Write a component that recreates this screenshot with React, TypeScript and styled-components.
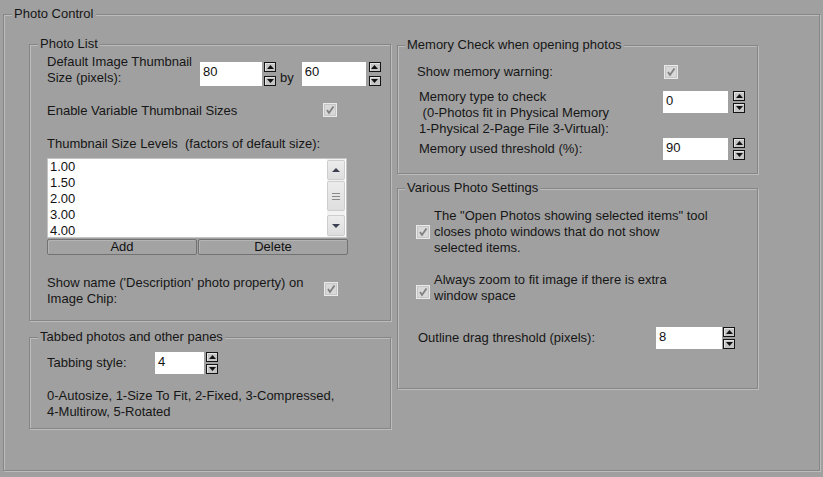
import React from 'react';
import styled, { createGlobalStyle } from 'styled-components';

const Global = createGlobalStyle`
  html, body { margin: 0; padding: 0; background: #a0a0a0; }
  body {
    font-family: "Liberation Sans", Arial, sans-serif;
    font-size: 13px;
    color: #161616;
  }
  * { box-sizing: border-box; }
`;

const Screen = styled.div`
  width: 823px;
  height: 477px;
  padding: 6px 3px 0 3px;
  background: #a0a0a0;
  overflow: hidden;
`;

const Group = styled.fieldset<{ $w: number; $h: number }>`
  margin: 0;
  padding: 0;
  min-width: 0;
  width: ${p => p.$w}px;
  height: ${p => p.$h}px;
  border: 1px solid #868686;
  box-shadow: inset 1px 1px 0 #bcbcbc, 1px 1px 0 #bcbcbc;
  flex: none;
`;

const Legend = styled.legend<{ $ml?: number }>`
  margin-left: ${p => p.$ml ?? 8}px;
  padding: 0 2px;
  line-height: 16px;
  background: #a0a0a0;
  color: #161616;
`;

const Body = styled.div<{ $pt: number; $pl: number }>`
  display: flex;
  flex-direction: column;
  align-items: flex-start;
  padding: ${p => p.$pt}px 0 0 ${p => p.$pl}px;
`;

const Columns = styled.div`
  display: flex;
  gap: 6px;
  padding: 14px 0 0 25px;
`;

const Column = styled.div<{ $mt?: number; $gap: number }>`
  display: flex;
  flex-direction: column;
  gap: ${p => p.$gap}px;
  margin-top: ${p => p.$mt ?? 0}px;
`;

const Row = styled.div<{ $align?: string; $mt?: number }>`
  display: flex;
  align-items: ${p => p.$align ?? 'center'};
  margin-top: ${p => p.$mt ?? 0}px;
`;

const Text = styled.div<{ $w?: number; $mt?: number; $indent?: number }>`
  width: ${p => (p.$w ? `${p.$w}px` : 'auto')};
  margin-top: ${p => p.$mt ?? 0}px;
  padding-left: ${p => p.$indent ?? 0}px;
  line-height: 16px;
  white-space: nowrap;
  flex: none;
`;

const By = styled.span`
  margin: 0 8px 0 4px;
  line-height: 16px;
`;

/* ---------- spin edit ---------- */
const Field = styled.div<{ $w: number; $h: number }>`
  width: ${p => p.$w}px;
  height: ${p => p.$h}px;
  background: #ffffff;
  padding: 2px 3px 0 3px;
  line-height: 16px;
  color: #111;
  flex: none;
`;

const Spinner = styled.div<{ $h: number; $gap: number }>`
  display: flex;
  flex-direction: column;
  justify-content: space-between;
  height: ${p => p.$h}px;
  margin-left: ${p => p.$gap}px;
  flex: none;
`;

const SpinBtn = styled.span`
  display: flex;
  align-items: center;
  justify-content: center;
  width: 12px;
  height: 10px;
  border: 1px solid #141414;
  background: #c6c6c6;
  box-shadow: inset 1px 1px 0 #e4e4e4;
`;

const Tri = ({ up }: { up?: boolean }) => (
  <svg width="7" height="4" viewBox="0 0 7 4">
    {up ? <polygon points="0,4 7,4 3.5,0" fill="#111" /> : <polygon points="0,0 7,0 3.5,4" fill="#111" />}
  </svg>
);

const Spin = ({ value, w, h, gap }: { value: string; w: number; h: number; gap: number }) => (
  <>
    <Field $w={w} $h={h}>{value}</Field>
    <Spinner $h={h} $gap={gap}>
      <SpinBtn><Tri up /></SpinBtn>
      <SpinBtn><Tri /></SpinBtn>
    </Spinner>
  </>
);

/* ---------- check box ---------- */
const CheckBox = styled.span<{ $mt?: number }>`
  display: flex;
  align-items: center;
  justify-content: center;
  width: 14px;
  height: 14px;
  margin-top: ${p => p.$mt ?? 0}px;
  background: #d8d8d8;
  border: 1px solid #eaeaea;
  box-shadow: inset 0 0 0 1px #c6c6c6;
  flex: none;
`;

const Check = ({ mt }: { mt?: number }) => (
  <CheckBox $mt={mt}>
    <svg width="10" height="10" viewBox="0 0 10 10">
      <path d="M2 5 L4 8 L8.5 1.5" fill="none" stroke="#808080" strokeWidth="1.8" />
    </svg>
  </CheckBox>
);

/* ---------- list box ---------- */
const ListBox = styled.div`
  display: flex;
  width: 300px;
  height: 80px;
  margin-top: 6px;
  background: #fff;
  border: 1px solid #c4c4c4;
`;

const Items = styled.div`
  flex: 1;
  padding-left: 2px;
  line-height: 16px;
  color: #111;
  overflow: hidden;
`;

const ScrollBar = styled.div`
  width: 18px;
  display: flex;
  flex-direction: column;
  padding: 1px 0;
  margin-right: 1px;
  background: #f2f2f2;
`;

const ScrollBtn = styled.div<{ $h: number }>`
  height: ${p => p.$h}px;
  display: flex;
  align-items: center;
  justify-content: center;
  background: linear-gradient(#ececec, #dedede);
  border: 1px solid #cdcdcd;
  border-radius: 2px;
  flex: none;
`;

const Track = styled.div`
  flex: 1;
  padding-top: 1px;
`;

const Thumb = styled(ScrollBtn)`
  flex-direction: column;
  gap: 2px;
`;

const Grip = styled.span`
  width: 8px;
  height: 1px;
  background: #8a8a8a;
`;

const ArrowGlyph = ({ up }: { up?: boolean }) => (
  <svg width="8" height="4" viewBox="0 0 8 4">
    {up ? <polygon points="0,4 8,4 4,0" fill="#3d4050" /> : <polygon points="0,0 8,0 4,4" fill="#3d4050" />}
  </svg>
);

const ButtonRow = styled.div`
  display: flex;
  gap: 1px;
  margin-top: 1px;
`;

const Button = styled.div`
  width: 150px;
  height: 16px;
  line-height: 14px;
  text-align: center;
  border: 1px solid #727272;
  border-radius: 2px;
  background: #a3a3a3;
  box-shadow: inset 1px 1px 0 #b4b4b4;
  color: #111;
`;

export default function App() {
  return (
    <Screen>
      <Global />
      <Group $w={817} $h={465}>
        <Legend $ml={8}>Photo Control</Legend>
        <Columns>
          <Column $gap={8}>
            <Group $w={362} $h={285}>
              <Legend>Photo List</Legend>
              <Body $pt={2} $pl={17}>
                <Row $align="flex-end">
                  <Text $w={153}>Default Image Thumbnail<br />Size (pixels):</Text>
                  <Spin value="80" w={62} h={24} gap={2} />
                  <By>by</By>
                  <Spin value="60" w={64} h={24} gap={3} />
                </Row>
                <Row $align="flex-start" $mt={17}>
                  <Text $w={276}>Enable Variable Thumbnail Sizes</Text>
                  <Check />
                </Row>
                <Text $mt={17}>Thumbnail Size Levels&nbsp; (factors of default size):</Text>
                <ListBox>
                  <Items>
                    <div>1.00</div>
                    <div>1.50</div>
                    <div>2.00</div>
                    <div>3.00</div>
                    <div>4.00</div>
                  </Items>
                  <ScrollBar>
                    <ScrollBtn $h={20}><ArrowGlyph up /></ScrollBtn>
                    <Track>
                      <Thumb $h={30}>
                        <Grip /><Grip /><Grip />
                      </Thumb>
                    </Track>
                    <ScrollBtn $h={21}><ArrowGlyph /></ScrollBtn>
                  </ScrollBar>
                </ListBox>
                <ButtonRow>
                  <Button>Add</Button>
                  <Button>Delete</Button>
                </ButtonRow>
                <Row $align="flex-start" $mt={20}>
                  <Text $w={277}>Show name ('Description' photo property) on<br />Image Chip:</Text>
                  <Check mt={7} />
                </Row>
              </Body>
            </Group>
            <Group $w={362} $h={100}>
              <Legend>Tabbed photos and other panes</Legend>
              <Body $pt={7} $pl={17}>
                <Row>
                  <Text $w={108}>Tabbing style:</Text>
                  <Spin value="4" w={49} h={22} gap={2} />
                </Row>
                <Text $mt={14}>0-Autosize, 1-Size To Fit, 2-Fixed, 3-Compressed,<br />4-Multirow, 5-Rotated</Text>
              </Body>
            </Group>
          </Column>
          <Column $gap={6} $mt={1}>
            <Group $w={361} $h={137}>
              <Legend $ml={7}>Memory Check when opening photos</Legend>
              <Body $pt={11} $pl={19}>
                <Row $align="flex-start">
                  <Text $w={247}>Show memory warning:</Text>
                  <Check mt={1} />
                </Row>
                <Row $align="flex-start" $mt={9}>
                  <Text $w={246} $indent={2}>Memory type to check<br />&nbsp;(0-Photos fit in Physical Memory<br />1-Physical 2-Page File 3-Virtual):</Text>
                  <Row $mt={2}>
                    <Spin value="0" w={65} h={22} gap={5} />
                  </Row>
                </Row>
                <Row $mt={1}>
                  <Text $w={246} $indent={2}>Memory used threshold (%):</Text>
                  <Spin value="90" w={65} h={22} gap={5} />
                </Row>
              </Body>
            </Group>
            <Group $w={361} $h={209}>
              <Legend $ml={7}>Various Photo Settings</Legend>
              <Body $pt={12} $pl={18}>
                <Row $align="flex-start">
                  <Check mt={17} />
                  <Text $indent={4}>The "Open Photos showing selected items" tool<br />closes photo windows that do not show<br />selected items.</Text>
                </Row>
                <Row $align="flex-start" $mt={16}>
                  <Check mt={13} />
                  <Text $indent={4}>Always zoom to fit image if there is extra<br />window space</Text>
                </Row>
                <Row $mt={23}>
                  <Text $w={240} $indent={2}>Outline drag threshold (pixels):</Text>
                  <Spin value="8" w={66} h={22} gap={1} />
                </Row>
              </Body>
            </Group>
          </Column>
        </Columns>
      </Group>
    </Screen>
  );
}
